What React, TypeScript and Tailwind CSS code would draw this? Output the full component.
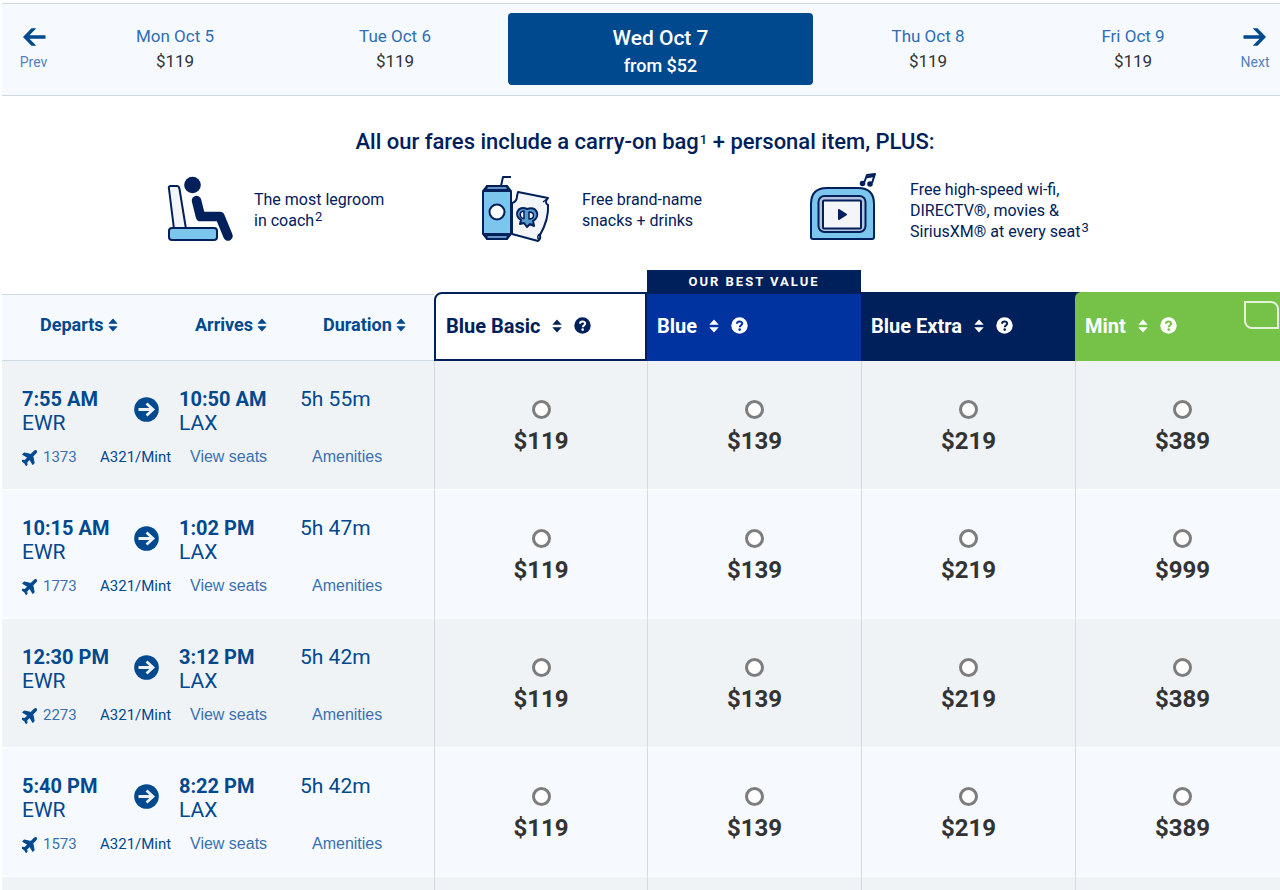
import { useState, type ReactNode } from "react";

type FareKey = "basic" | "blue" | "extra" | "mint";
type Flight = {
  departs: string; from: string; arrives: string; to: string;
  duration: string; number: string; aircraft: string; fares: Record<FareKey, number>;
};

const fareKeys: { key: FareKey; label: string }[] = [
  { key: "basic", label: "Blue Basic" }, { key: "blue", label: "Blue" },
  { key: "extra", label: "Blue Extra" }, { key: "mint", label: "Mint" },
];

const flights: Flight[] = [
  { departs: "7:55 AM", from: "EWR", arrives: "10:50 AM", to: "LAX", duration: "5h 55m", number: "1373", aircraft: "A321/Mint", fares: { basic: 119, blue: 139, extra: 219, mint: 389 } },
  { departs: "10:15 AM", from: "EWR", arrives: "1:02 PM", to: "LAX", duration: "5h 47m", number: "1773", aircraft: "A321/Mint", fares: { basic: 119, blue: 139, extra: 219, mint: 999 } },
  { departs: "12:30 PM", from: "EWR", arrives: "3:12 PM", to: "LAX", duration: "5h 42m", number: "2273", aircraft: "A321/Mint", fares: { basic: 119, blue: 139, extra: 219, mint: 389 } },
  { departs: "5:40 PM", from: "EWR", arrives: "8:22 PM", to: "LAX", duration: "5h 42m", number: "1573", aircraft: "A321/Mint", fares: { basic: 119, blue: 139, extra: 219, mint: 389 } },
];

export default function App() {
  const [selected, setSelected] = useState<string | null>(null);

  return (
    <main className="h-screen overflow-hidden bg-white pl-0.5 pt-[3px] font-['Roboto','Liberation_Sans',sans-serif] text-[#00205b]">
      <DateBar />
      <Perks />
      <table className="mt-11 w-[calc(100%+9px)] table-fixed border-separate border-spacing-0">
        <colgroup>
          <col className="w-[155px]" />
          <col className="w-[128px]" />
          <col className="w-[149px]" />
          <col className="w-[213px]" />
          <col /><col /><col />
        </colgroup>
        <thead>
          <tr>
            {["Departs", "Arrives", "Duration"].map((h) => (
              <th key={h} scope="col" className="p-0 pt-0.5 text-left">
                <div className="flex h-[67px] items-center border-y border-[#cfd9e1] bg-[#f6fafe] pb-1.5 pl-[38px]">
                  <button className="flex items-center gap-1 text-[18px] font-bold leading-6 text-[#00498f]">{h}<SortIcon /></button>
                </div>
              </th>
            ))}
            <th scope="col" className="p-0">
              <FareHead label="Blue Basic" className="rounded-tl-lg border-2 border-[#00205b] bg-white pl-2.5" />
            </th>
            <th scope="col" className="relative p-0">
              <div className="absolute inset-x-0 bottom-[67px] flex h-6 items-center justify-center bg-[#00205b] text-[13px] font-bold tracking-[2px] text-white">OUR BEST VALUE</div>
              <FareHead label="Blue" className="bg-[#0033a0] pl-2.5 text-white" />
            </th>
            <th scope="col" className="p-0">
              <FareHead label="Blue Extra" className="bg-[#00205b] pl-2.5 text-white" />
            </th>
            <th scope="col" className="relative bg-[#00205b] p-0">
              <FareHead label="Mint" className="rounded-tl-md bg-[#76c148] pl-2.5 text-white" />
              <span className="absolute right-2.5 top-[9px] h-7 w-[35px] rounded-bl-lg rounded-tr-lg border-2 border-[#e3f3d8]" />
            </th>
          </tr>
        </thead>
        <tbody>
          {flights.map((f) => (
            <tr key={f.number} className="odd:bg-[#f0f3f6] even:bg-[#f6fafe]">
              <td colSpan={3} className="border-b border-white p-0 align-top">
                <FlightInfo flight={f} />
              </td>
              {fareKeys.map(({ key, label }) => {
                const id = `${f.number}-${key}`;
                return (
                  <td key={key} className="border-b border-l border-b-white border-l-[#d3dbe1] p-0 align-top">
                    <label className="flex flex-col items-center pt-[39px]">
                      <input type="radio" name="fare" aria-label={`${label}, flight ${f.number}`} checked={selected === id} onChange={() => setSelected(id)}
                        className="size-[19px] appearance-none rounded-full border-3 border-[#7d7d7d] bg-white checked:bg-[#00498f]" />
                      <span className="mt-[7px] text-[24px] font-bold leading-[30px] text-[#333]">${f.fares[key]}</span>
                    </label>
                  </td>
                );
              })}
            </tr>
          ))}
          <tr className="bg-[#f0f3f6]">
            <td colSpan={3} className="h-[129px]" />
            {fareKeys.map(({ key }) => <td key={key} className="border-l border-[#d3dbe1]" />)}
          </tr>
        </tbody>
      </table>
    </main>
  );
}

function DateBar() {
  return (
    <nav className="grid h-[93px] grid-cols-[63px_220fr_220fr_315fr_216fr_194fr_50px] border-y border-[#cfd9e1] bg-[#f6fafe]">
      <StepButton label="Prev" />
      <DayButton day="Mon Oct 5" />
      <DayButton day="Tue Oct 6" />
      <button className="mb-2.5 ml-[3px] mr-[7px] mt-[9px] flex flex-col items-center rounded bg-[#00498f] pt-[11px] text-white">
        <span className="text-[21px] font-medium leading-7">Wed Oct 7</span>
        <span className="text-[18px] font-medium leading-7">from $52</span>
      </button>
      <DayButton day="Thu Oct 8" />
      <DayButton day="Fri Oct 9" />
      <StepButton label="Next" />
    </nav>
  );
}

function DayButton({ day }: { day: string }) {
  return (
    <button className="flex flex-col items-center justify-start pt-5 text-[17px] leading-[25px]">
      <span className="text-[#2e6eb5]">{day}</span>
      <span className="text-[#333]">$119</span>
    </button>
  );
}

function StepButton({ label }: { label: "Prev" | "Next" }) {
  return (
    <button className="flex flex-col items-center justify-start gap-[5px] pt-[23px] text-[14px] leading-5 text-[#5580bd]">
      <svg width="24" height="20" viewBox="0 0 24 20" fill="#00498f">
        {label === "Prev"
          ? <path d="M1 10 9.500 1.200h4.800L7.500 8.200H23.500v3.600H7.500l6.800 7H9.500z" />
          : <path d="M23 10 14.500 1.200H9.700l6.800 7H.500v3.600h16l-6.800 7h4.800z" />}
      </svg>
      {label}
    </button>
  );
}

function Perks() {
  return (
    <section className="pl-2 pt-8">
      <h1 className="text-center text-[22px] font-medium leading-7">
        All our fares include a carry-on bag<Sup>1</Sup> + personal item, PLUS:
      </h1>
      <div className="mx-auto mt-4 grid h-[76px] max-w-[984px] grid-cols-3">
        <Perk icon={<SeatIcon />}>The most legroom<br />in coach<Sup>2</Sup></Perk>
        <Perk icon={<SnackIcon />}>Free brand-name<br />snacks + drinks</Perk>
        <Perk icon={<ScreenIcon />}>Free high-speed wi-fi,<br />DIRECTV®, movies &amp;<br />SiriusXM® at every seat<Sup>3</Sup></Perk>
      </div>
    </section>
  );
}

function Perk({ icon, children }: { icon: ReactNode; children: ReactNode }) {
  return (
    <div className="flex items-center gap-[15px]">
      {icon}
      <p className="whitespace-nowrap text-[16px] leading-[21px]">{children}</p>
    </div>
  );
}

function Sup({ children }: { children: ReactNode }) {
  return <sup className="top-[-5px] ml-px text-[13px] leading-none">{children}</sup>;
}

function FareHead({ label, className }: { label: string; className: string }) {
  const maskId = `help-${label.replace(" ", "-")}`;
  return (
    <div className={`flex h-[69px] items-center pb-0.5 text-[20px] font-bold leading-6 ${className}`}>
      <button className="flex items-center gap-3">{label}<SortIcon /></button>
      <button aria-label={`About ${label}`} className="ml-3">
        <svg width="17" height="17" viewBox="0 0 17 17">
          <mask id={maskId}>
            <circle cx="8.500" cy="8.500" r="8.200" fill="#fff" />
            <path d="M6 6.800C6 3.700 11.200 3.800 11.200 6.600c0 1.800-2.400 1.700-2.400 3.600" fill="none" stroke="#000" strokeWidth="2" />
            <circle cx="8.700" cy="12.600" r="1.300" fill="#000" />
          </mask>
          <rect width="17" height="17" fill="currentColor" mask={`url(#${maskId})`} />
        </svg>
      </button>
    </div>
  );
}

function FlightInfo({ flight: f }: { flight: Flight }) {
  return (
    <div className="h-32 pl-5 pt-[26px] text-[#00498f]">
      <div className="grid grid-cols-[112px_45px_121px_1fr] text-[21px] leading-6">
        <div><strong className="text-[20px]">{f.departs}</strong><br />{f.from}</div>
        <svg width="25" height="25" viewBox="0 0 25 25" className="mt-2.5">
          <circle cx="12.500" cy="12.500" r="12.300" fill="#00498f" />
          <path d="M4.500 12.500H18M12.500 6.500l6.500 6-6.500 6" fill="none" stroke="#f0f3f6" strokeWidth="2.800" />
        </svg>
        <div><strong className="text-[20px]">{f.arrives}</strong><br />{f.to}</div>
        <div>{f.duration}</div>
      </div>
      <div className="mt-2.5 grid grid-cols-[78px_90px_122px_1fr] text-[15px] leading-6 text-[#3a70b2]">
        <a href="#flight" className="flex items-center gap-1"><PlaneIcon />{f.number}</a>
        <span className="text-[#00498f]">{f.aircraft}</span>
        <a href="#seats" className="font-['Liberation_Sans',sans-serif] text-[16px]">View seats</a>
        <a href="#amenities" className="font-['Liberation_Sans',sans-serif] text-[16px]">Amenities</a>
      </div>
    </div>
  );
}

function PlaneIcon() {
  return (
    <svg width="17" height="17" viewBox="2 1 22 22" fill="#00498f" stroke="#00498f" strokeWidth="1.400" strokeLinejoin="round">
      <path transform="rotate(45 12 12)" d="M21 15.500V13l-7.500-5V2.500C13.500 1 12.800 0 12 0s-1.500 1-1.500 2.500V8L3 13v2.500l7.500-2V19L8 21v1.500l4-1 4 1V21l-2.500-2v-5.500z" />
    </svg>
  );
}

function SortIcon() {
  return (
    <svg width="10" height="14" viewBox="0 0 10 14" fill="currentColor">
      <path d="M5 .500 9.700 5.800H.300zM5 13.500.300 8.200h9.400z" />
    </svg>
  );
}

function SeatIcon() {
  return (
    <svg width="86" height="70" viewBox="0 -1 86 70" className="shrink-0" stroke="#00205b" strokeWidth="2" strokeLinejoin="round">
      <path d="M16 13q-1-3 2-3h6q2 0 2.500 3L33 53H21z" fill="#f4f5f8" />
      <rect x="16" y="52" width="48" height="12" rx="3" fill="#7cc5ec" />
      <circle cx="39.500" cy="9" r="8.300" fill="#00205b" stroke="none" />
      <path d="M43.500 24.500 47.500 40.500H67L75 60" fill="none" strokeWidth="9.500" strokeLinecap="round" />
    </svg>
  );
}

function SnackIcon() {
  return (
    <svg width="86" height="70" viewBox="0 1 86 70" className="shrink-0" fill="none" stroke="#00205b" strokeWidth="2" strokeLinejoin="round">
      <path d="M37 18 67 24Q63 29 67 31 68 45 59 61 60 65 57 67L31 60V29q5-1 5-7z" fill="#f4f5f8" />
      <path d="M58 66q-3-4 1-6M62 28l4-3" strokeWidth="1.500" />
      <path d="M20 12 22 3h8" />
      <path d="M6 12H26L30 17V60L26 65H6L2 60V17z" fill="#7cc5ec" />
      <path d="M2 17H30M2 60H30" />
      <path d="M6 12H26l1 4H5zM5 61h22l-1 4H6z" fill="#6694c3" />
      <circle cx="16" cy="38" r="7.500" fill="#fff" />
      <path d="M39 50l1-4c-8-5-3-15 6-11 10-3 14 7 6 12l1 5-4-2-3 3-3-4z" fill="#579bd0" />
      <path d="M43 37c-6 0-4 8 0 7.500zM48 38v7c6 0 6-7 0-7z" fill="#f4f5f8" strokeWidth="1.500" />
    </svg>
  );
}

function ScreenIcon() {
  return (
    <svg width="86" height="70" viewBox="0 2 86 70" className="shrink-0 overflow-visible" fill="none" stroke="#00205b" strokeWidth="2" strokeLinejoin="round">
      <path d="M2 64V31Q2 15 18 15H49Q65 15 65 31V64Q65 66 63 66H4Q2 66 2 64z" fill="#7cc5ec" />
      <rect x="9.500" y="23" width="47" height="36" rx="6" fill="#b6c5df" />
      <rect x="14" y="27.500" width="38" height="28" rx="1" fill="#f4f5f8" />
      <path d="m30 37 7 4.500-7 4.500z" fill="#00205b" />
      <path d="m55 10 3-8 8-1-3 9M57 4.500 65 3" />
      <circle cx="53.500" cy="10.500" r="1.800" fill="#00205b" />
      <circle cx="61" cy="11" r="1.800" fill="#00205b" />
    </svg>
  );
}
